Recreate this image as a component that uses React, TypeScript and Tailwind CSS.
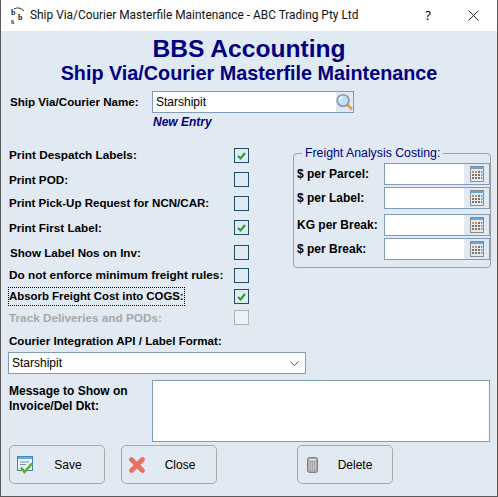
import type { ReactNode } from "react";

const checkRows = [
  { label: "Print Despatch Labels:", checked: true, top: "mt-0", size: "text-[11.8px]" },
  { label: "Print POD:", checked: false, top: "mt-[9px]", size: "text-[11.7px]" },
  { label: "Print Pick-Up Request for NCN/CAR:", checked: false, top: "mt-[9px]", size: "text-[11.55px]" },
  { label: "Print First Label:", checked: true, top: "mt-[9px]", size: "text-[11.7px]" },
  { label: "Show Label Nos on Inv:", checked: false, top: "mt-[10px]", size: "text-[11.6px]", indent: "ml-[1px]" },
  { label: "Do not enforce minimum freight rules:", checked: false, top: "mt-[8px]", size: "text-[11.8px]" },
  { label: "Absorb Freight Cost into COGS:", checked: true, top: "mt-[6px]", size: "text-[11.4px]", focused: true },
  { label: "Track Deliveries and PODs:", checked: false, top: "mt-[6px]", size: "text-[11.75px]", disabled: true },
];

const costRows = [
  { label: "$ per Parcel:", top: "mt-[3px]" },
  { label: "$ per Label:", top: "mt-[2px]" },
  { label: "KG per Break:", top: "mt-[5px]" },
  { label: "$ per Break:", top: "mt-[2px]" },
];

function AppIcon() {
  return (
    <svg width="16" height="20" viewBox="0 0 16 20" className="shrink-0">
      <path d="M4 3 Q9 0 14 5" fill="none" stroke="#333" strokeWidth="1" />
      <text x="1" y="9" fontSize="8" fontWeight="700" fontFamily="Liberation Serif, serif" fill="#222">b</text>
      <text x="8" y="14" fontSize="8" fontWeight="700" fontFamily="Liberation Serif, serif" fill="#222">b</text>
      <text x="1" y="18" fontSize="8" fontWeight="700" fontFamily="Liberation Serif, serif" fill="#222">s</text>
    </svg>
  );
}

function SearchIcon() {
  return (
    <svg width="17" height="18" viewBox="0 0 18 18">
      <path d="M12 12 L16 16" stroke="#d9a441" strokeWidth="3" strokeLinecap="round" />
      <circle cx="7.5" cy="7.5" r="6.2" fill="#bfe0f5" stroke="#8a9aa8" strokeWidth="1.8" />
      <path d="M3.5 7 A4 4 0 0 1 7 3.5" fill="none" stroke="#fff" strokeWidth="1.4" />
    </svg>
  );
}

function CalcIcon() {
  return (
    <svg width="14" height="16" viewBox="0 0 14 16">
      <rect x="0.5" y="0.5" width="13" height="15" fill="#e8e8e8" stroke="#8c8c8c" />
      <rect x="1" y="1" width="12" height="2" fill="#5fa8e6" />
      <rect x="2" y="5" width="2" height="2" fill="#e08a4a" />
      <rect x="5" y="5" width="2" height="2" fill="#e08a4a" />
      <rect x="8" y="5" width="2" height="2" fill="#777" />
      <rect x="11" y="5" width="1.5" height="2" fill="#5fa8e6" />
      <rect x="2" y="8" width="2" height="2" fill="#777" />
      <rect x="5" y="8" width="2" height="2" fill="#777" />
      <rect x="8" y="8" width="2" height="2" fill="#777" />
      <rect x="11" y="8" width="1.5" height="2" fill="#5fa8e6" />
      <rect x="2" y="11" width="2" height="2" fill="#777" />
      <rect x="5" y="11" width="2" height="2" fill="#777" />
      <rect x="8" y="11" width="2" height="2" fill="#777" />
      <rect x="11" y="11" width="1.5" height="2" fill="#5fa8e6" />
    </svg>
  );
}

function SaveIcon() {
  return (
    <svg width="17" height="20" viewBox="0 0 17 20">
      <rect x="0.5" y="1.5" width="15" height="14" fill="#e9f1f8" stroke="#3f86bd" />
      <rect x="1" y="2" width="14" height="2" fill="#6ba9d8" />
      <path d="M3 7 H12 M3 9.5 H9" stroke="#7f93a5" strokeWidth="1" />
      <path d="M4 12.5 L7.5 17 L15 8.5" fill="none" stroke="#5fae2e" strokeWidth="2.6" />
    </svg>
  );
}

function CloseIcon() {
  return (
    <svg width="16" height="16" viewBox="0 0 16 16">
      <path d="M2.5 2.5 L13.5 13.5 M13.5 2.5 L2.5 13.5" stroke="#e8705f" strokeWidth="4.6" strokeLinecap="round" />
    </svg>
  );
}

function TrashIcon() {
  return (
    <svg width="11" height="16" viewBox="0 0 11 16">
      <rect x="0.5" y="0.5" width="10" height="15" rx="2" fill="#a9a9a9" stroke="#7f7f7f" />
      <rect x="2" y="2" width="7" height="1.5" fill="#e4e4e4" />
      <path d="M2.5 5.5 V13.5 M4.5 5.5 V13.5 M6.5 5.5 V13.5 M8.5 5.5 V13.5" stroke="#dedede" strokeDasharray="1 1" />
    </svg>
  );
}

function CheckBox({ checked, disabled }: { checked: boolean; disabled?: boolean }) {
  return (
    <div
      className={`flex h-[15px] w-[15px] shrink-0 items-center justify-center border ${
        disabled ? "border-[#b5b5b5] bg-[#eef2f7]" : "border-[#1f4e66]"
      }`}
    >
      {checked && (
        <svg width="9" height="8" viewBox="0 0 9 8">
          <path d="M1 4 L3.5 6.5 L8 1" fill="none" stroke="#22a02c" strokeWidth="2" />
        </svg>
      )}
    </div>
  );
}

function ActionButton({ icon, label, iconBox, textBox }: { icon: ReactNode; label: string; iconBox: string; textBox: string }) {
  return (
    <button className="flex h-[39px] w-[96px] items-center rounded-[5px] border border-[#a9a9a9] text-[12px] text-black">
      <span className={`flex justify-center ${iconBox}`}>{icon}</span>
      <span className={`text-center ${textBox}`}>{label}</span>
    </button>
  );
}

export default function App() {
  return (
    <div className="flex h-[497px] w-[498px] flex-col border-x border-b border-[#5a5a5a] bg-[#e1e9f3] font-['Liberation_Sans',sans-serif] text-[12px] text-black">
      <div className="flex h-[31px] shrink-0 items-center bg-white pr-[18px] pl-[9px]">
        <AppIcon />
        <span className="ml-[4px] flex-1 font-['Roboto',sans-serif] text-[11.9px] text-[#111]">
          Ship Via/Courier Masterfile Maintenance - ABC Trading Pty Ltd
        </span>
        <span className="font-['Noto_Sans',sans-serif] text-[13px]">?</span>
        <svg width="11" height="11" viewBox="0 0 11 11" className="ml-[37px]">
          <path d="M0.5 0.5 L10.5 10.5 M10.5 0.5 L0.5 10.5" stroke="#222" />
        </svg>
      </div>

      <div className="mt-[5px] h-[26px] text-center text-[24.6px] leading-[26px] font-bold text-[#000080]">BBS Accounting</div>
      <div className="mt-[1px] h-[21px] text-center text-[19.8px] leading-[21px] font-bold text-[#000080]">
        Ship Via/Courier Masterfile Maintenance
      </div>

      <div className="mt-[7px] flex h-[22px] items-center pl-[9px]">
        <span className="w-[142px] text-[11.6px] font-bold">Ship Via/Courier Name:</span>
        <div className="flex h-[22px] w-[202px] items-center border border-[#7f9db9] bg-white pl-[3px]">
          <span className="flex-1">Starshipit</span>
          <span className="flex h-full w-[17px] items-center justify-center bg-[#e1e9f3]">
            <SearchIcon />
          </span>
        </div>
      </div>
      <div className="mt-[1px] h-[16px] pl-[152px] leading-[16px] font-bold text-[#000080] italic">New Entry</div>

      <div className="mt-[18px] flex">
        <div className="w-[248px] pl-[8px]">
          {checkRows.map((row) => (
            <div key={row.label} className={`flex h-[15px] items-center justify-between ${row.top}`}>
              <span
                className={`font-bold ${row.size} ${row.indent ?? ""} ${row.disabled ? "text-[#a8a8a8]" : ""} ${
                  row.focused ? "outline-1 outline-black outline-dotted" : ""
                }`}
              >
                {row.label}
              </span>
              <CheckBox checked={row.checked} disabled={row.disabled} />
            </div>
          ))}
        </div>

        <fieldset className="mt-[-2px] ml-[44px] h-[122px] w-[198px] rounded-[4px] border border-[#a0a0a0] pl-[3px]">
          <legend className="ml-[5px] px-[3px] text-[12.3px] leading-[14px] text-[#000080]">Freight Analysis Costing:</legend>
          {costRows.map((row) => (
            <div key={row.label} className={`flex h-[22px] items-center ${row.top}`}>
              <span className="w-[87px] text-[12px] font-bold">{row.label}</span>
              <div className="flex h-[22px] w-[106px] justify-end border border-[#7f9db9] bg-white">
                <span className="flex h-full w-[25px] items-center justify-center bg-[#e1e9f3]">
                  <CalcIcon />
                </span>
              </div>
            </div>
          ))}
        </fieldset>
      </div>

      <div className="mt-[9px] h-[14px] pl-[8px] text-[11.6px] leading-[14px] font-bold">Courier Integration API / Label Format:</div>
      <div className="mt-[4px] ml-[7px] flex h-[22px] w-[298px] items-center justify-between border border-[#7f9db9] bg-white pr-[6px] pl-[3px]">
        <span>Starshipit</span>
        <svg width="9" height="5" viewBox="0 0 9 5">
          <path d="M0.5 0.5 L4.5 4.5 L8.5 0.5" fill="none" stroke="#555" />
        </svg>
      </div>

      <div className="mt-[6px] flex pl-[8px]">
        <div className="w-[143px] pt-[4px] leading-[15px] font-bold">
          Message to Show on
          <br />
          Invoice/Del Dkt:
        </div>
        <div className="h-[62px] w-[338px] border border-[#7f9db9] bg-white" />
      </div>

      <div className="mt-[3px] flex pl-[8px]">
        <ActionButton icon={<SaveIcon />} label="Save" iconBox="ml-[6px] w-[18px]" textBox="ml-[10px] w-[48px]" />
        <div className="ml-[16px]">
          <ActionButton icon={<CloseIcon />} label="Close" iconBox="ml-[6px] w-[18px]" textBox="ml-[10px] w-[48px]" />
        </div>
        <div className="ml-[80px]">
          <ActionButton icon={<TrashIcon />} label="Delete" iconBox="ml-[6px] w-[16px]" textBox="ml-[11px] w-[48px]" />
        </div>
      </div>
    </div>
  );
}
